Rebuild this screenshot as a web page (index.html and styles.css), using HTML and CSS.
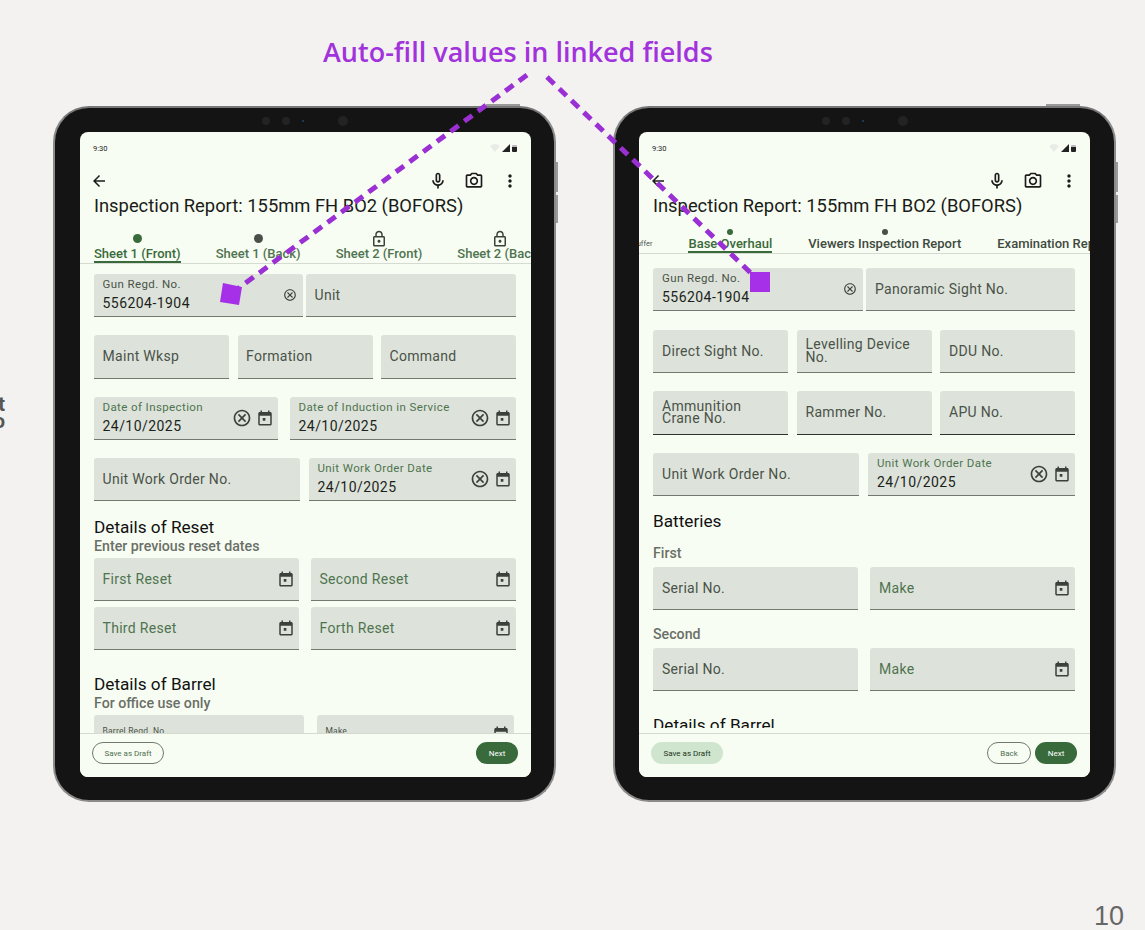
FILE: index.html
```html
<!DOCTYPE html>
<html lang="en">

<head>
    <meta charset="UTF-8">
    <meta name="viewport" content="width=device-width, initial-scale=1.0">
    <title>Auto-fill values in linked fields</title>
    <link rel="stylesheet" href="styles.css">
</head>

<body>
    <svg class="icon-defs">
        <symbol id="i-back" viewBox="0 0 24 24"><path d="M20 11H7.83l5.59-5.59L12 4l-8 8 8 8 1.41-1.41L7.83 13H20v-2z"/></symbol>
        <symbol id="i-mic" viewBox="0 0 24 24"><path d="M12 14c1.66 0 3-1.34 3-3V5c0-1.66-1.34-3-3-3S9 3.34 9 5v6c0 1.66 1.34 3 3 3zm-1-9c0-.55.45-1 1-1s1 .45 1 1v6c0 .55-.45 1-1 1s-1-.45-1-1V5zm6 6c0 2.76-2.24 5-5 5s-5-2.24-5-5H5c0 3.53 2.61 6.43 6 6.92V21h2v-3.08c3.39-.49 6-3.39 6-6.92h-2z"/></symbol>
        <symbol id="i-camera" viewBox="0 0 24 24"><path d="M20 4h-3.17L15 2H9L7.17 4H4c-1.1 0-2 .9-2 2v12c0 1.1.9 2 2 2h16c1.1 0 2-.9 2-2V6c0-1.1-.9-2-2-2zm0 14H4V6h4.05l1.83-2h4.24l1.83 2H20v12zM12 7c-2.76 0-5 2.24-5 5s2.24 5 5 5 5-2.24 5-5-2.24-5-5-5zm0 8c-1.65 0-3-1.35-3-3s1.35-3 3-3 3 1.35 3 3-1.35 3-3 3z"/></symbol>
        <symbol id="i-more" viewBox="0 0 24 24"><path d="M12 8c1.1 0 2-.9 2-2s-.9-2-2-2-2 .9-2 2 .9 2 2 2zm0 2c-1.1 0-2 .9-2 2s.9 2 2 2 2-.9 2-2-.9-2-2-2zm0 6c-1.1 0-2 .9-2 2s.9 2 2 2 2-.9 2-2-.9-2-2-2z"/></symbol>
        <symbol id="i-clear" viewBox="0 0 24 24"><path d="M12 2C6.47 2 2 6.47 2 12s4.47 10 10 10 10-4.47 10-10S17.53 2 12 2zm0 18c-4.41 0-8-3.59-8-8s3.59-8 8-8 8 3.59 8 8-3.59 8-8 8zm3.59-13L12 10.59 8.41 7 7 8.41 10.59 12 7 15.59 8.41 17 12 13.41 15.59 17 17 15.59 13.41 12 17 8.41z"/></symbol>
        <symbol id="i-event" viewBox="0 0 24 24"><path d="M19 4h-1V2h-2v2H8V2H6v2H5c-1.11 0-1.99.9-1.99 2L3 20c0 1.1.89 2 2 2h14c1.1 0 2-.9 2-2V6c0-1.1-.9-2-2-2zm0 16H5V9h14v11zM9 12h3.5v3.5H9z"/></symbol>
        <symbol id="i-lock" viewBox="0 0 24 24"><path d="M18 8h-1V6c0-2.76-2.24-5-5-5S7 3.24 7 6v2H6c-1.1 0-2 .9-2 2v10c0 1.1.9 2 2 2h12c1.1 0 2-.9 2-2V10c0-1.1-.9-2-2-2zM9 6c0-1.66 1.34-3 3-3s3 1.34 3 3v2H9V6zm9 14H6V10h12v10zm-6-3c1.1 0 2-.9 2-2s-.9-2-2-2-2 .9-2 2 .9 2 2 2z"/></symbol>
    </svg>

    <div class="slide">
        <h1 class="slide-title">Auto-fill values in linked fields</h1>

        <div class="tablets">
            <!-- left tablet -->
            <div class="tablet">
                <span class="top-button"></span>
                <span class="side-button side-a"></span>
                <span class="side-button side-b"></span>
                <div class="cameras"><i></i><i></i><i class="lens-blue"></i><i class="lens-far"></i></div>
                <div class="screen">
                    <div class="status">
                        <span>9:30</span>
                        <div class="status-icons">
                            <svg width="10" height="8" viewBox="0 0 10 8"><path d="M0 2q5-4 10 0L5 8z" fill="#e9ece6"/></svg>
                            <svg width="8" height="8" viewBox="0 0 8 8"><path d="M8 0v8H0z" fill="#222"/></svg>
                            <span class="battery"></span>
                        </div>
                    </div>
                    <div class="toolbar">
                        <svg class="ic-back"><use href="#i-back"/></svg>
                        <div class="toolbar-actions">
                            <svg class="ic-bar"><use href="#i-mic"/></svg>
                            <svg class="ic-bar"><use href="#i-camera"/></svg>
                            <svg class="ic-bar"><use href="#i-more"/></svg>
                        </div>
                    </div>
                    <div class="page-title">Inspection Report: 155mm FH BO2 (BOFORS)</div>
                    <div class="tabs">
                        <div class="tab active"><div class="marker"><span class="dot"></span></div><div class="tab-label">Sheet 1 (Front)</div></div>
                        <div class="tab open"><div class="marker"><span class="dot grey"></span></div><div class="tab-label">Sheet 1 (Back)</div></div>
                        <div class="tab open"><div class="marker"><svg class="ic-lock"><use href="#i-lock"/></svg></div><div class="tab-label">Sheet 2 (Front)</div></div>
                        <div class="tab open"><div class="marker"><svg class="ic-lock"><use href="#i-lock"/></svg></div><div class="tab-label">Sheet 2 (Back)</div></div>
                    </div>
                    <div class="form">
                        <div class="row cols-pair">
                            <div class="field">
                                <div class="field-text"><div class="float">Gun Regd. No.</div><div class="value">556204-1904</div></div>
                                <svg class="ic-clear-sm"><use href="#i-clear"/></svg>
                            </div>
                            <div class="field"><div class="hint">Unit</div></div>
                        </div>
                        <div class="row cols-three">
                            <div class="field"><div class="hint">Maint Wksp</div></div>
                            <div class="field"><div class="hint">Formation</div></div>
                            <div class="field"><div class="hint">Command</div></div>
                        </div>
                        <div class="row cols-date">
                            <div class="field">
                                <div class="field-text"><div class="float green">Date of Inspection</div><div class="value">24/10/2025</div></div>
                                <svg class="ic-clear"><use href="#i-clear"/></svg>
                                <svg class="ic-event"><use href="#i-event"/></svg>
                            </div>
                            <div class="field">
                                <div class="field-text"><div class="float green">Date of Induction in Service</div><div class="value">24/10/2025</div></div>
                                <svg class="ic-clear"><use href="#i-clear"/></svg>
                                <svg class="ic-event"><use href="#i-event"/></svg>
                            </div>
                        </div>
                        <div class="row cols-order">
                            <div class="field"><div class="hint">Unit Work Order No.</div></div>
                            <div class="field">
                                <div class="field-text"><div class="float green">Unit Work Order Date</div><div class="value">24/10/2025</div></div>
                                <svg class="ic-clear"><use href="#i-clear"/></svg>
                                <svg class="ic-event"><use href="#i-event"/></svg>
                            </div>
                        </div>

                        <h3 class="section section-reset">Details of Reset</h3>
                        <div class="section-sub">Enter previous reset dates</div>
                        <div class="row-tight cols-half">
                            <div class="field"><div class="hint green">First Reset</div><svg class="ic-event"><use href="#i-event"/></svg></div>
                            <div class="field"><div class="hint green">Second Reset</div><svg class="ic-event"><use href="#i-event"/></svg></div>
                            <div class="field"><div class="hint green">Third Reset</div><svg class="ic-event"><use href="#i-event"/></svg></div>
                            <div class="field"><div class="hint green">Forth Reset</div><svg class="ic-event"><use href="#i-event"/></svg></div>
                        </div>

                        <h3 class="section section-barrel">Details of Barrel</h3>
                        <div class="section-sub">For office use only</div>
                        <div class="row-tight cols-barrel">
                            <div class="field field-cut"><div class="float-low">Barrel Regd. No.</div></div>
                            <div class="field field-cut"><div class="float-low">Make</div><svg class="ic-event"><use href="#i-event"/></svg></div>
                        </div>
                    </div>
                    <div class="footer">
                        <button class="btn btn-outline btn-draft">Save as Draft</button>
                        <button class="btn btn-primary">Next</button>
                    </div>
                </div>
            </div>

            <!-- right tablet -->
            <div class="tablet tablet-right">
                <span class="top-button"></span>
                <span class="side-button side-a"></span>
                <span class="side-button side-b"></span>
                <div class="cameras"><i></i><i></i><i class="lens-blue"></i><i class="lens-far"></i></div>
                <div class="screen">
                    <div class="status">
                        <span>9:30</span>
                        <div class="status-icons">
                            <svg width="10" height="8" viewBox="0 0 10 8"><path d="M0 2q5-4 10 0L5 8z" fill="#e9ece6"/></svg>
                            <svg width="8" height="8" viewBox="0 0 8 8"><path d="M8 0v8H0z" fill="#222"/></svg>
                            <span class="battery"></span>
                        </div>
                    </div>
                    <div class="toolbar">
                        <svg class="ic-back"><use href="#i-back"/></svg>
                        <div class="toolbar-actions">
                            <svg class="ic-bar"><use href="#i-mic"/></svg>
                            <svg class="ic-bar"><use href="#i-camera"/></svg>
                            <svg class="ic-bar"><use href="#i-more"/></svg>
                        </div>
                    </div>
                    <div class="page-title">Inspection Report: 155mm FH BO2 (BOFORS)</div>
                    <div class="tabs tabs-scrolled">
                        <div class="tab tab-buffer"><div class="marker"></div><div class="tab-label">Buffer</div></div>
                        <div class="tab active"><div class="marker"><span class="dot"></span></div><div class="tab-label">Base Overhaul</div></div>
                        <div class="tab dark"><div class="marker"><span class="dot grey"></span></div><div class="tab-label">Viewers Inspection Report</div></div>
                        <div class="tab dark"><div class="marker"></div><div class="tab-label">Examination Report</div></div>
                    </div>
                    <div class="form form-scrolled">
                        <div class="row cols-pair">
                            <div class="field">
                                <div class="field-text"><div class="float">Gun Regd. No.</div><div class="value">556204-1904</div></div>
                                <svg class="ic-clear-sm"><use href="#i-clear"/></svg>
                            </div>
                            <div class="field"><div class="hint">Panoramic Sight No.</div></div>
                        </div>
                        <div class="row cols-three">
                            <div class="field"><div class="hint">Direct Sight No.</div></div>
                            <div class="field"><div class="hint wrap">Levelling Device<br>No.</div></div>
                            <div class="field"><div class="hint">DDU No.</div></div>
                        </div>
                        <div class="row cols-three">
                            <div class="field dark-line"><div class="hint wrap">Ammunition<br>Crane No.</div></div>
                            <div class="field dark-line"><div class="hint">Rammer No.</div></div>
                            <div class="field dark-line"><div class="hint">APU No.</div></div>
                        </div>
                        <div class="row cols-order">
                            <div class="field"><div class="hint">Unit Work Order No.</div></div>
                            <div class="field">
                                <div class="field-text"><div class="float green">Unit Work Order Date</div><div class="value">24/10/2025</div></div>
                                <svg class="ic-clear"><use href="#i-clear"/></svg>
                                <svg class="ic-event"><use href="#i-event"/></svg>
                            </div>
                        </div>

                        <h3 class="section section-batteries">Batteries</h3>
                        <div class="group-label group-first">First</div>
                        <div class="row-tight cols-half">
                            <div class="field"><div class="hint">Serial No.</div></div>
                            <div class="field"><div class="hint green">Make</div><svg class="ic-event"><use href="#i-event"/></svg></div>
                        </div>
                        <div class="group-label group-second">Second</div>
                        <div class="row-tight cols-half">
                            <div class="field"><div class="hint">Serial No.</div></div>
                            <div class="field"><div class="hint green">Make</div><svg class="ic-event"><use href="#i-event"/></svg></div>
                        </div>
                        <h3 class="section section-barrel-b">Details of Barrel</h3>
                    </div>
                    <div class="footer">
                        <button class="btn btn-soft btn-draft">Save as Draft</button>
                        <button class="btn btn-outline btn-back">Back</button>
                        <button class="btn btn-primary">Next</button>
                    </div>
                </div>
            </div>
        </div>

        <!-- callout lines sit on top of both tablets -->
        <svg class="callout" viewBox="0 0 1145 930">
            <line x1="527" y1="75" x2="232" y2="293" class="callout-line"/>
            <line x1="547" y1="77" x2="756" y2="278" class="callout-line"/>
            <polygon points="223,283 242,287 239,305 220,302" class="callout-end"/>
            <rect x="750" y="272" width="20" height="20" class="callout-end"/>
        </svg>

        <div class="cut-text">t<br>o</div>
        <div class="page-number">10</div>
    </div>
</body>

</html>
```

FILE: styles.css
```css
* {
    box-sizing: border-box;
}

body {
    margin: 0;
    background-color: #f3f2f1;
    font-family: Roboto, "Liberation Sans", sans-serif;
}

.icon-defs {
    display: none;
}

.slide {
    position: relative;
    width: 1145px;
    height: 930px;
    overflow: hidden;
}

.slide-title {
    margin: 0;
    height: 106px;
    padding: 34px 0 0 323px;
    font-family: "Open Sans", sans-serif;
    font-size: 27px;
    line-height: 36px;
    font-weight: 600;
    color: #a233dc;
}

.tablets {
    display: flex;
    gap: 57px;
    padding-left: 53px;
}

/* device frame */
.tablet {
    position: relative;
    width: 503px;
    height: 696px;
    padding: 24px 23px 23px 25px;
    background: #141414;
    border: 2px solid #8b8b8b;
    border-top-color: #77777a;
    border-radius: 36px;
}

.tablet-right {
    padding-left: 24px;
    padding-right: 24px;
}

.top-button {
    position: absolute;
    top: -4px;
    right: 34px;
    width: 34px;
    height: 2px;
    background: #9a9a9a;
}

.side-button {
    position: absolute;
    right: -4px;
    width: 2px;
    background: #9a9a9a;
}

.side-a {
    top: 54px;
    height: 30px;
}

.side-b {
    top: 87px;
    height: 28px;
}

.cameras {
    position: absolute;
    top: 8px;
    left: 207px;
    display: flex;
    align-items: center;
}

.cameras i {
    display: block;
    width: 8px;
    height: 8px;
    margin-right: 12px;
    border-radius: 50%;
    background: #232323;
}

.cameras .lens-blue {
    width: 2px;
    height: 2px;
    margin-right: 34px;
    background: #24406e;
}

.cameras .lens-far {
    width: 10px;
    height: 10px;
    margin-right: 0;
}

.screen {
    display: flex;
    flex-direction: column;
    height: 645px;
    overflow: hidden;
    background: #f8fdf3;
    border-radius: 8px;
}

.status {
    display: flex;
    justify-content: space-between;
    align-items: center;
    flex: none;
    height: 32px;
    padding: 0 14px 0 13px;
    font-size: 7.5px;
    color: #222;
}

.status-icons {
    display: flex;
    align-items: center;
    gap: 2px;
}

.battery {
    width: 5px;
    height: 7px;
    background: #222;
    border-top: 2px solid #bbb;
    border-radius: 1px;
}

.toolbar {
    display: flex;
    justify-content: space-between;
    align-items: center;
    flex: none;
    height: 22px;
    margin-top: 6px;
    padding: 0 11px 0 10px;
}

.toolbar svg {
    fill: #1c1c1c;
}

.ic-back {
    width: 18px;
    height: 18px;
}

.toolbar-actions {
    display: flex;
    gap: 16px;
}

.ic-bar {
    width: 20px;
    height: 20px;
}

.page-title {
    flex: none;
    margin-top: 3px;
    padding-left: 14px;
    font-size: 18.35px;
    line-height: 22px;
    color: #191c18;
    white-space: nowrap;
}

/* tabs */
.tabs {
    display: flex;
    flex: none;
    gap: 35px;
    margin-top: 13px;
    padding-left: 14px;
    overflow: hidden;
    border-bottom: 1px solid #d6dbd2;
    --marker: 17px;
}

.tabs-scrolled {
    gap: 36px;
    margin-top: 9px;
    padding-left: 0;
    --marker: 11px;
}

.tab {
    flex: none;
    font-size: 13px;
    font-weight: 500;
    color: #4f7350;
}

.tab-buffer {
    margin-left: -7px;
    color: #555;
    font-size: 7.5px;
    font-weight: 400;
}

.tab.dark {
    color: #3e4a3e;
}

.marker {
    display: flex;
    justify-content: center;
    align-items: center;
    height: var(--marker);
}

.dot {
    width: 9px;
    height: 9px;
    border-radius: 50%;
    background: #386a3b;
}

.dot.grey {
    background: #4a4f4a;
}

.tabs-scrolled .dot {
    width: 6px;
    height: 6px;
}

.ic-lock {
    width: 18px;
    height: 18px;
    fill: #3c423b;
}

.tab-label {
    height: 16px;
    line-height: 14px;
    white-space: nowrap;
    border-bottom: 2px solid transparent;
}

.tab.active .tab-label {
    color: #386a3b;
    border-bottom-color: #386a3b;
}

/* form */
.form {
    flex: 1;
    min-height: 0;
    overflow: hidden;
    padding: 10px 15px 0 14px;
}

.form-scrolled {
    padding-top: 14px;
}

.row {
    display: grid;
    margin-bottom: 18px;
}

.form-scrolled .row {
    margin-bottom: 18.35px;
}

.row-tight {
    display: grid;
    row-gap: 5.5px;
}

.cols-pair {
    grid-template-columns: 209px 1fr;
    column-gap: 3px;
}

.form-scrolled .cols-pair {
    grid-template-columns: 210px 1fr;
}

.cols-three {
    grid-template-columns: repeat(3, 1fr);
    column-gap: 8.5px;
}

.cols-date {
    grid-template-columns: 184px 1fr;
    column-gap: 12px;
}

.cols-order {
    grid-template-columns: 206px 1fr;
    column-gap: 9px;
}

.cols-half {
    grid-template-columns: 1fr 1fr;
    column-gap: 12px;
}

.cols-barrel {
    grid-template-columns: 210px 197px;
    column-gap: 13px;
}

.field {
    display: flex;
    align-items: center;
    gap: 4px;
    height: 43.3px;
    padding: 0 4px 0 8.5px;
    background: #dde3da;
    border-bottom: 1px solid #74796f;
    border-radius: 3px 3px 0 0;
}

.tablet-right .field {
    padding-left: 9px;
}

.dark-line {
    border-bottom-color: #2f332e;
}

.field-text {
    flex: 1;
    min-width: 0;
    align-self: flex-start;
    padding-top: 4px;
}

.float {
    font-size: 11.5px;
    line-height: 12px;
    letter-spacing: 0.4px;
    color: #4a5249;
    white-space: nowrap;
}

.green {
    color: #4f7350;
}

.value {
    margin-top: 5px;
    font-size: 14px;
    line-height: 16px;
    letter-spacing: 0.45px;
    color: #1c1f1b;
}

.hint {
    flex: 1;
    font-size: 14px;
    line-height: 16px;
    letter-spacing: 0.3px;
    color: #4a5249;
    white-space: nowrap;
}

.hint.wrap {
    line-height: 12.5px;
}

.hint.green {
    color: #4f7350;
}

/* row that runs under the footer, only the top of it shows */
.field-cut {
    align-items: flex-start;
    padding-top: 10px;
}

.float-low {
    flex: 1;
    font-size: 8.5px;
    line-height: 12px;
    letter-spacing: 0.2px;
    color: #4a5249;
}

.field svg {
    flex: none;
    fill: #3c423b;
}

.ic-clear {
    width: 20px;
    height: 20px;
}

.ic-clear-sm {
    width: 14px;
    height: 14px;
    margin-right: 2px;
}

.ic-event {
    width: 18px;
    height: 18px;
}

.section {
    margin: 0;
    font-size: 17.2px;
    line-height: 20px;
    font-weight: 400;
    color: #111;
}

.section-reset {
    margin-top: -2px;
}

.section-barrel {
    margin-top: 24px;
}

.section-batteries {
    margin-top: -4px;
}

.section-barrel-b {
    height: 13px;
    margin-top: 24px;
    overflow: hidden;
}

.section-sub {
    margin: 1.5px 0 4.5px;
    font-size: 14.2px;
    line-height: 15px;
    font-weight: 500;
    color: #6a6f68;
}

.group-label {
    font-size: 14.2px;
    line-height: 16px;
    font-weight: 500;
    color: #6a6f68;
}

.group-first {
    margin: 14px 0 6px;
}

.group-second {
    margin: 16px 0 6px;
}

/* bottom bar */
.footer {
    display: flex;
    flex: none;
    gap: 4px;
    height: 44px;
    padding: 8px 13px 0 12px;
    background: #f8fdf3;
    border-top: 1px solid #d6dbd2;
}

.btn {
    height: 22px;
    padding: 0;
    font-family: Roboto, sans-serif;
    font-size: 8px;
    border-radius: 11px;
    border: 1px solid transparent;
}

.btn-draft {
    width: 72px;
    margin-right: auto;
}

.btn-outline {
    background: transparent;
    border-color: #74796f;
    color: #4f6f50;
}

.btn-back {
    width: 44px;
}

.btn-soft {
    background: #cfe5cd;
    color: #1e3320;
}

.btn-primary {
    width: 42px;
    background: #386a3b;
    color: #fff;
}

/* annotation */
.callout {
    position: absolute;
    top: 0;
    left: 0;
    width: 1145px;
    height: 930px;
    pointer-events: none;
}

.callout-line {
    stroke: #9a30d4;
    stroke-width: 5;
    stroke-dasharray: 10 7;
}

.callout-end {
    fill: #a62fe8;
}

.cut-text {
    position: absolute;
    top: 396px;
    left: -7px;
    width: 12px;
    font-size: 20px;
    line-height: 17px;
    font-weight: 700;
    text-align: right;
    color: #555;
}

.page-number {
    position: absolute;
    right: 21px;
    bottom: 0;
    font-family: "Liberation Sans", sans-serif;
    font-size: 27px;
    line-height: 27px;
    color: #666;
}
```
